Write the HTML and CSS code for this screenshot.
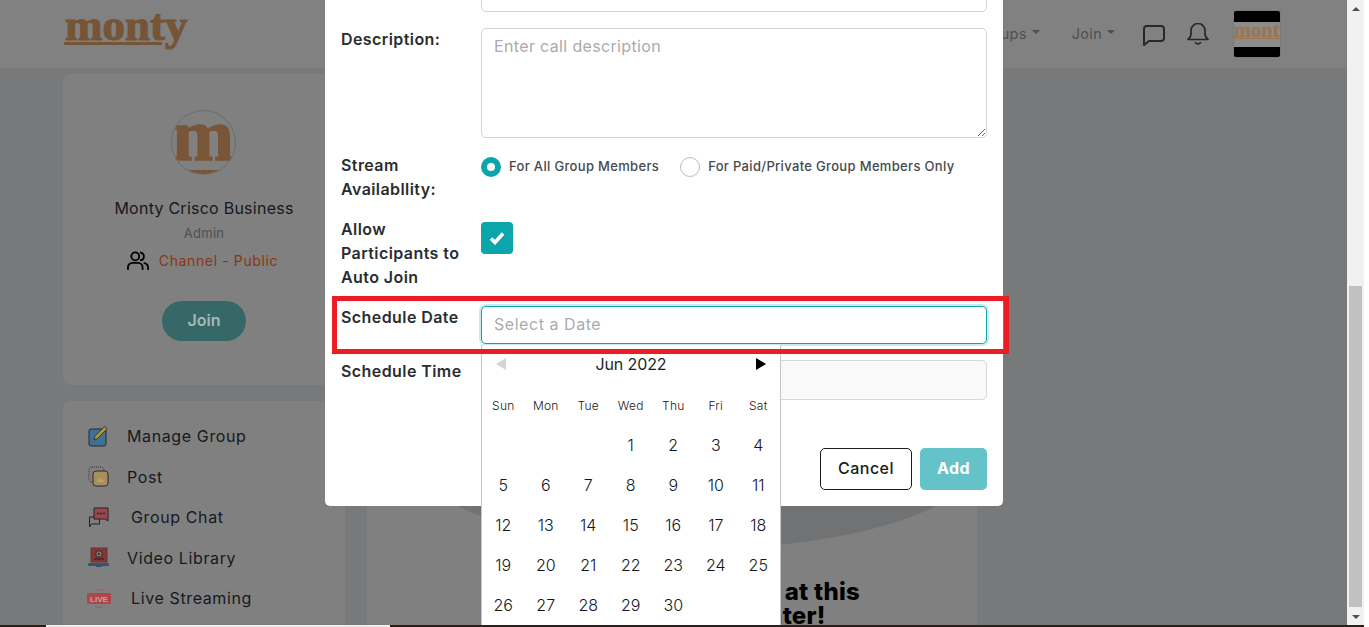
FILE: index.html
```html
<!DOCTYPE html>
<html lang="en">
<head>
<meta charset="utf-8">
<title>Monty – Schedule call</title>
<link rel="stylesheet" href="styles.css">
</head>
<body>
<div class="window">
  <div class="app">
    <header class="topbar">
      <a class="logo"><span class="logo-word">monty</span><span class="logo-rule"></span></a>
      <nav class="nav">
        <span class="nav-link nav-groups">Groups<i class="caret"></i></span>
        <span class="nav-link nav-join">Join<i class="caret"></i></span>
        <svg class="nav-icon nav-chat" viewBox="0 0 22 22" fill="none" stroke="#26282a" stroke-width="2" stroke-linejoin="round"><path d="M5 2h13a3 3 0 0 1 3 3v9a3 3 0 0 1-3 3H6l-5 4V5a3 3 0 0 1 3-3z"/></svg>
        <svg class="nav-icon nav-bell" viewBox="0 0 22 22" fill="none" stroke="#26282a" stroke-width="1.7" stroke-linecap="round" stroke-linejoin="round"><path d="M1 16.500c2-1.500 3-3 3-6V7.500a7 7 0 0 1 14 0v3c0 3 1 4.500 3 6z"/><path d="M8.500 19.800c1.200 1.400 3.800 1.400 5 0"/></svg>
        <div class="avatar"><span class="avatar-band"></span><span class="avatar-mid"><span class="avatar-word">monty</span></span><span class="avatar-band avatar-band--low"></span></div>
      </nav>
    </header>

    <div class="content">
      <aside class="side">
        <section class="card profile">
          <div class="profile-pic"><span class="profile-m">m</span><span class="profile-rule"></span></div>
          <h2 class="profile-name">Monty Crisco Business</h2>
          <p class="profile-role">Admin</p>
          <p class="profile-type">
            <svg class="people" viewBox="0 0 24 20" fill="none" stroke="#000" stroke-width="2" stroke-linecap="round"><circle cx="9" cy="5.500" r="4.300"/><path d="M1 19.500v-2a5 5 0 0 1 5-5h6a5 5 0 0 1 5 5v2"/><path d="M15 1.300a4.300 4.300 0 0 1 0 8.400"/><path d="M19 12.800a5 5 0 0 1 4 4.700v2"/></svg>
            <span class="channel">Channel - Public</span>
          </p>
          <button class="join-btn" type="button">Join</button>
        </section>

        <section class="card menu">
          <div class="menu-row">
            <svg class="menu-icon" viewBox="0 0 21 21"><rect x="1" y="3" width="17" height="17" rx="2" fill="#3f7192" stroke="#1f2b33"/><path d="M6 14l1-4 9-9c1-.8 3 .6 2.500 2.500l-9 9z" fill="#a69538" stroke="#2a2a1e" stroke-width=".8"/></svg>
            <span class="menu-label">Manage Group</span>
          </div>
          <div class="menu-row">
            <svg class="menu-icon" viewBox="0 0 21 21"><rect x="1" y="1" width="15" height="15" rx="3" fill="none" stroke="#333" stroke-dasharray="1 1"/><rect x="5" y="5" width="15" height="15" rx="3" fill="#a68f5c" stroke="#2b2b2b"/><path d="M8.500 16l3-4 2 2 1-1 2.500 3z" fill="#bba36f"/></svg>
            <span class="menu-label">Post</span>
          </div>
          <div class="menu-row">
            <svg class="menu-icon" viewBox="0 0 21 21"><path d="M1.500 10h10v7h-8l-2 3z" fill="#7e7e7e" stroke="#222"/><path d="M6 1h14v13l-3-2H6z" fill="#99494c" stroke="#2a2020"/><circle cx="10" cy="6.500" r="1" fill="#222"/><circle cx="13" cy="6.500" r="1" fill="#222"/><circle cx="16" cy="6.500" r="1" fill="#222"/></svg>
            <span class="menu-label menu-label--indent">Group Chat</span>
          </div>
          <div class="menu-row">
            <svg class="menu-icon" viewBox="0 0 21 21"><rect x="3" y="1" width="16" height="14" fill="#8e3230" stroke="#444"/><circle cx="11" cy="7" r="3.200" fill="#8a7a78" stroke="#2a1a1a" stroke-width=".8"/><path d="M10 5.500l2.500 1.500-2.500 1.500z" fill="#222"/><path d="M6 12h10" stroke="#2a1a1a"/><rect x="0" y="16" width="21" height="3" rx="1" fill="#3f5168"/><rect x="8" y="18" width="6" height="2" fill="#3f5168"/></svg>
            <span class="menu-label">Video Library</span>
          </div>
          <div class="menu-row">
            <svg class="menu-icon menu-icon--live" viewBox="0 0 24 23"><rect x="0" y="6" width="24" height="11" rx="1" fill="#ad474c"/><path d="M8 4c2-2 6-2 8 0M8 19c2 2 6 2 8 0" fill="none" stroke="#a55" stroke-width="1"/><text x="12" y="14.700" text-anchor="middle" class="live-text">LIVE</text></svg>
            <span class="menu-label menu-label--indent">Live Streaming</span>
          </div>
        </section>
      </aside>

      <main class="feed">
        <div class="feed-blob"></div>
        <h3 class="feed-title"><span class="feed-line">There are no other posts at this</span><span class="feed-line feed-line--second">time. Do check back later!</span></h3>
      </main>
    </div>

    <div class="modal">
      <form class="form">
        <div class="row row--first">
          <span></span>
          <input class="field field--first" type="text">
        </div>
        <div class="row row--desc">
          <label class="label label--tight">Description:</label>
          <textarea class="field field--area" placeholder="Enter call description"></textarea>
        </div>
        <div class="row row--stream">
          <label class="label">Stream Availabllity:</label>
          <div class="radios">
            <span class="radio radio--on"></span><span class="radio-text">For All Group Members</span>
            <span class="radio radio--off"></span><span class="radio-text">For Paid/Private Group Members Only</span>
          </div>
        </div>
        <div class="row row--allow">
          <label class="label">Allow Participants to Auto Join</label>
          <span class="check"><svg viewBox="0 0 16 14" class="check-mark"><path d="M2 7.500l4 4 8-9" fill="none" stroke="#fff" stroke-width="3.600"/></svg></span>
        </div>
        <div class="row row--date">
          <label class="label label--tight">Schedule Date</label>
          <input class="field field--focus" type="text" placeholder="Select a Date">
        </div>
        <div class="row row--time">
          <label class="label label--tight">Schedule Time</label>
          <input class="field field--disabled" type="text">
        </div>
        <div class="actions">
          <button class="btn btn--cancel" type="button">Cancel</button>
          <button class="btn btn--add" type="button">Add</button>
        </div>
      </form>

      <div class="picker">
        <div class="picker-head">
          <i class="arrow arrow--prev"></i>
          <span class="picker-month">Jun 2022</span>
          <i class="arrow arrow--next"></i>
        </div>
        <div class="picker-grid picker-week">
          <span>Sun</span><span>Mon</span><span>Tue</span><span>Wed</span><span>Thu</span><span>Fri</span><span>Sat</span>
        </div>
        <div class="picker-grid picker-days">
          <span></span><span></span><span></span><span>1</span><span>2</span><span>3</span><span>4</span>
          <span>5</span><span>6</span><span>7</span><span>8</span><span>9</span><span>10</span><span>11</span>
          <span>12</span><span>13</span><span>14</span><span>15</span><span>16</span><span>17</span><span>18</span>
          <span>19</span><span>20</span><span>21</span><span>22</span><span>23</span><span>24</span><span>25</span>
          <span>26</span><span>27</span><span>28</span><span>29</span><span>30</span>
        </div>
      </div>
    </div>

    <div class="callout"></div>
  </div>

  <div class="scrollbar">
    <div class="scroll-btn"><i class="scroll-up"></i></div>
    <div class="scroll-thumb"></div>
    <div class="scroll-btn"><i class="scroll-down"></i></div>
  </div>
</div>
<div class="strip"><span class="strip-a"></span><span class="strip-b"></span><span class="strip-c"></span></div>
</body>
</html>
```
FILE: styles.css
```css
* { box-sizing: border-box; }
html, body { margin: 0; padding: 0; background: #fff; }
body {
  width: 1364px;
  height: 627px;
  overflow: hidden;
  font-family: "Inter", "Noto Sans", "Liberation Sans", sans-serif;
  color: #16191d;
}
.window { display: flex; height: 625px; overflow: hidden; }
.app { position: relative; width: 1347px; height: 625px; background: #78797b; overflow: hidden; }

/* top bar */
.topbar {
  display: flex; align-items: center; justify-content: space-between;
  height: 68px; padding: 0 67px 0 64px; background: #818181;
}
.logo { position: relative; display: block; width: 124px; height: 47px; margin-top: -9px; color: #765537; }
.logo-word {
  display: block; margin-top: -4px; margin-left: 1px;
  font: 700 45px/47px "Liberation Serif", serif;
  -webkit-text-stroke: 1.200px #765537;
}
.logo-rule { position: absolute; left: 0; top: 36px; width: 98px; height: 3px; background: #765537; }
.nav { display: flex; align-items: center; }
.nav-link { display: flex; align-items: center; margin-top: -2px; font-size: 14.500px; color: #4e4f50; letter-spacing: .3px; }
.nav-groups { margin-right: 32px; }
.nav-join { margin-right: 28px; }
.caret {
  width: 0; height: 0; margin-left: 5px; margin-top: -2px;
  border-left: 4.500px solid transparent; border-right: 4.500px solid transparent; border-top: 4.500px solid #4e4f50;
}
.nav-icon { display: block; flex: none; }
.nav-chat { width: 22px; height: 22px; margin-right: 22px; margin-top: 2px; }
.nav-bell { width: 22px; height: 22px; margin-right: 25px; }
.avatar {
  display: flex; flex-direction: column; width: 46px; height: 46px; border-radius: 2px;
  overflow: hidden; margin-top: -1px; box-shadow: 0 0 0 1px #797979;
}
.avatar-band { display: block; height: 11px; background: #000; flex: none; }
.avatar-band--low { height: 10px; }
.avatar-mid { display: block; flex: 1; background: #8c8c8c; overflow: hidden; }
.avatar-word {
  display: block; width: 46px; height: 16px; margin-top: 1px; white-space: nowrap; overflow: hidden;
  font: 700 20.500px/15px "Liberation Serif", serif; color: #9a7650; -webkit-text-stroke: .3px #9a7650;
  border-bottom: 1px solid #9a7650;
}

/* page body */
.content { display: flex; padding: 6px 0 0 63px; }
.side { width: 282px; flex: none; }
.card { background: #808080; border-radius: 8px; }
.profile {
  height: 311px; padding-top: 36px;
  display: flex; flex-direction: column; align-items: center;
}
.profile-pic {
  position: relative; left: -1px; width: 65px; height: 65px; border-radius: 50%;
  border: 1px solid #6d6d6d; overflow: hidden; flex: none;
}
.profile-m {
  position: absolute; left: -1px; top: -13px; width: 65px; text-align: center;
  font: 700 74px/74px "Liberation Serif", serif; color: #785637; -webkit-text-stroke: 1.400px #785637;
}
.profile-rule { position: absolute; left: 0; right: 0; top: 59px; height: 4px; background: #785637; }
.profile-name { margin: 21px 0 0; font-size: 16px; line-height: 24px; font-weight: 400; letter-spacing: .25px; color: #15181c; }
.profile-role { margin: 4px 0 0; font-size: 13px; line-height: 18px; color: #4d4f51; letter-spacing: .3px; }
.profile-type { position: relative; left: -1.500px; display: flex; align-items: center; margin: 6px 0 0; height: 24px; }
.people { width: 22px; height: 19px; margin-right: 10px; flex: none; }
.channel { font-size: 14px; color: #8b3511; letter-spacing: .62px; }
.join-btn {
  width: 84px; height: 40px; margin-top: 29px; padding: 0 0 2px; border: 0; border-radius: 20px;
  background: #366868; color: #a5b8b8; font: 600 16px "Inter", sans-serif;
}
.menu { height: 240px; margin-top: 16px; padding: 15px 0 0 25px; }
.menu-row { display: flex; align-items: center; height: 40.500px; }
.menu-icon { width: 21px; height: 21px; margin-right: 18px; flex: none; }
.menu-icon--live { width: 24px; height: 23px; margin: 0 16px 0 -1px; }
.live-text { font: 700 8px "Liberation Sans", sans-serif; fill: #c9a0a2; }
.menu-label { font-size: 16px; letter-spacing: .62px; color: #16191d; }
.menu-label--indent { margin-left: 4px; }

.feed {
  width: 610px; height: 560px; margin-left: 22px; background: #808080; border-radius: 8px 8px 0 0;
  overflow: hidden; padding-top: 272px;
}
.feed-blob { width: 586px; height: 203px; margin-left: 37px; border-radius: 50%; background: #707274; }
.feed-title {
  margin: 31px 0 0; font-size: 24px; line-height: 24px; font-weight: 800; color: #000; text-align: center;
  letter-spacing: .25px; white-space: nowrap;
}
.feed-line { display: block; }
.feed-line--second { padding-right: 6px; }

/* modal */
.modal { position: absolute; left: 325px; top: 0; width: 678px; height: 506px; background: #fff; border-radius: 0 0 5px 5px; }
.form { padding: 0 16px 16px; }
.row { display: grid; grid-template-columns: 140px 506px; align-items: start; }
.row--first { margin-top: -28px; }
.row--desc { margin-top: 16px; }
.row--stream { margin-top: 15px; }
.row--allow { margin-top: 16px; }
.row--date { margin-top: 17px; }
.row--time { margin-top: 16px; }
.label { display: block; font-size: 16px; line-height: 24px; font-weight: 600; color: #2a2d30; letter-spacing: .42px; padding-right: 4px; }
.label--tight { margin-top: -1px; }
.field {
  display: block; width: 506px; height: 40px; padding: 0 12px 2px;
  border: 1px solid #d0d3da; border-radius: 5px; background: #fff; outline: 0;
  font: 400 16px/24px "Inter", sans-serif; letter-spacing: .55px; color: #222;
}
.field::placeholder { color: #aaabad; opacity: 1; }
.field--area { height: 110px; padding-top: 5px; letter-spacing: .35px; resize: vertical; }
.field--focus { height: 38px; border: 1.500px solid #17a3a9; box-shadow: 0 0 0 2px #c9ebed; }
.field--disabled { background: #f9f9f9; border-color: #d6d6d6; }
.radios { display: flex; align-items: center; height: 20px; margin-top: 4px; }
.radios > .radio-text { margin-top: -3px; }
.radio { width: 20px; height: 20px; border-radius: 50%; flex: none; }
.radio--on { border: 6px solid #0ca5ab; background: #fff; }
.radio--off { border: 1px solid #b8bcc4; margin-left: 21px; }
.radio-text { margin-left: 8px; font-size: 13px; font-weight: 500; color: #47494c; white-space: nowrap; letter-spacing: .33px; }
.check {
  display: flex; align-items: center; justify-content: center;
  width: 32px; height: 32px; margin-top: 5px; border-radius: 4px; background: #0ca5ab;
}
.check-mark { width: 16px; height: 14px; }
.actions { display: flex; justify-content: flex-end; gap: 8px; margin-top: 48px; }
.btn { height: 42px; padding: 0 0 2px; border-radius: 5px; font: 500 16px "Inter", sans-serif; letter-spacing: .45px; }
.btn--cancel { width: 92px; background: #fff; border: 1px solid #1b1b1b; color: #1b1b1b; }
.btn--add { width: 67px; background: #64c3c9; border: 0; color: #fff; font-weight: 700; }

/* date picker */
.picker {
  position: absolute; left: 156px; top: 345px; width: 300px; height: 290px;
  background: #fff; border: 1px solid #c6c6c6; border-width: 0 1px;
}
.picker-head { display: flex; align-items: center; justify-content: space-between; height: 39px; padding: 0 14px 2px; }
.picker-month { font-size: 16px; letter-spacing: -.12px; color: #1c1f22; }
.arrow { width: 0; height: 0; border-top: 6px solid transparent; border-bottom: 6px solid transparent; }
.arrow--prev { border-right: 10px solid #d4d4d4; }
.arrow--next { border-left: 10px solid #000; }
.picker-grid { display: grid; grid-template-columns: repeat(7, 42.500px); text-align: center; color: #15181b; }
.picker-week { height: 41px; padding-top: 2px; align-items: center; font-size: 12px; letter-spacing: .2px; font-weight: 300; }
.picker-days { grid-auto-rows: 40px; align-items: center; font-size: 16px; font-weight: 300; }

.callout { position: absolute; left: 332px; top: 296px; width: 677px; height: 58px; border: 5.500px solid #ed1c24; pointer-events: none; }

/* scrollbar */
.scrollbar { display: flex; flex-direction: column; width: 17px; height: 625px; background: #f1f1f1; }
.scroll-btn { display: flex; align-items: center; justify-content: center; height: 17px; flex: none; }
.scroll-thumb { width: 13px; height: 321px; margin: 269px 0 1px 2px; background: #c1c1c1; flex: none; }
.scroll-up, .scroll-down { width: 0; height: 0; border-left: 4px solid transparent; border-right: 4px solid transparent; }
.scroll-up { border-bottom: 4px solid #505050; }
.scroll-down { border-top: 4px solid #505050; }

/* bottom strip */
.strip { display: flex; height: 2px; }
.strip-a { width: 46px; background: #2b1f17; }
.strip-b { width: 344px; background: #ededed; }
.strip-c { flex: 1; background: #2b1f17; }
```
